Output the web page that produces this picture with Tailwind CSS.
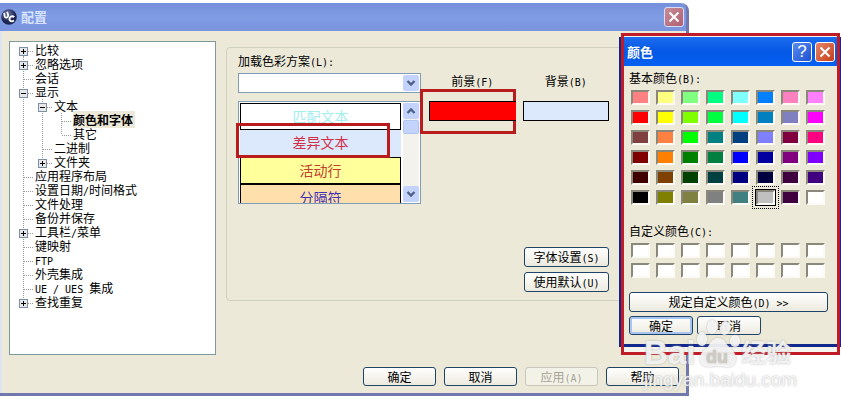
<!DOCTYPE html>
<html lang="zh-CN">
<head>
  <meta charset="UTF-8" />
  <meta name="viewport" content="width=device-width, initial-scale=1.0" />
  <title>配置</title>

  <!-- Tailwind (CDN) -->
  <script src="https://cdn.jsdelivr.net/npm/@tailwindcss/browser@4"></script>
</head>

<body class="bg-white text-black text-[12px] leading-[14px] font-['Noto_Sans_CJK_SC',sans-serif]">

  <!-- tree symbols -->
  <svg class="hidden">
    <symbol id="line" viewBox="0 0 19 14"><path d="M9.5 0V14" stroke="#9a9a9a" stroke-dasharray="1 1" /></symbol>
    <symbol id="tee" viewBox="0 0 19 14"><path d="M9.5 0V14M10 8.5H19" stroke="#9a9a9a" stroke-dasharray="1 1" fill="none" /></symbol>
    <symbol id="corner" viewBox="0 0 19 14"><path d="M9.5 0V8M10 8.5H19" stroke="#9a9a9a" stroke-dasharray="1 1" fill="none" /></symbol>
    <symbol id="box" viewBox="0 0 19 14">
      <path d="M14 8.5H19" stroke="#9a9a9a" stroke-dasharray="1 1" />
      <rect x="5.5" y="4.5" width="8" height="8" fill="#e6e8e8" stroke="#7b8ea5" />
      <path d="M7 8.5H12" stroke="#000" />
    </symbol>
    <symbol id="minus" viewBox="0 0 19 14"><path d="M9.5 0V14" stroke="#9a9a9a" stroke-dasharray="1 1" /><use href="#box" /></symbol>
    <symbol id="plus" viewBox="0 0 19 14"><path d="M9.5 0V14" stroke="#9a9a9a" stroke-dasharray="1 1" /><use href="#box" /><path d="M9.5 6V11" stroke="#000" /></symbol>
    <symbol id="plus-first" viewBox="0 0 19 14"><path d="M9.5 13V14" stroke="#9a9a9a" /><use href="#box" /><path d="M9.5 6V11" stroke="#000" /></symbol>
    <symbol id="plus-last" viewBox="0 0 19 14"><path d="M9.5 0V4" stroke="#9a9a9a" stroke-dasharray="1 1" /><use href="#box" /><path d="M9.5 6V11" stroke="#000" /></symbol>
    <symbol id="down" viewBox="0 0 16 16"><path d="M4.5 6L8 9.5L11.5 6" stroke="#4d6185" stroke-width="2.4" fill="none" /></symbol>
    <symbol id="up" viewBox="0 0 16 16"><path d="M4.5 10L8 6.5L11.5 10" stroke="#4d6185" stroke-width="2.4" fill="none" /></symbol>
    <symbol id="close" viewBox="0 0 20 20"><path d="M5 5L15 15M15 5L5 15" stroke="#fff" stroke-width="2.2" /></symbol>
  </svg>

  <div class="relative pt-[3px] pr-[152px]">

    <!-- main window -->
    <main class="border-r-[3px] border-b-[3px] border-[#7078ae] rounded-tr-lg bg-[#ece9d8]">
      <header class="h-7 flex items-center justify-between pl-px pr-[2px] rounded-tr-md bg-linear-to-b from-[#7590dc] via-[#7f9ce4] to-[#7a94e0]">
        <div class="flex items-center gap-1">
          <svg class="w-4 h-4" viewBox="0 0 16 16">
            <defs><radialGradient id="ball" cx=".4" cy=".3"><stop offset="0" stop-color="#6d78a8" /><stop offset="1" stop-color="#1c2450" /></radialGradient></defs>
            <circle cx="8" cy="8" r="7.8" fill="url(#ball)" />
            <path d="M3.2 3.8L3.6 7.2Q4.2 9 6 8.4Q7.6 7.6 7 5.6L6.2 2.8" fill="none" stroke="#fff" stroke-width="1.7" />
            <path d="M13.2 8.2Q11.6 6.6 9.6 7.8Q7.8 9.4 8.8 11.4Q10.4 13.2 13 11.6" fill="none" stroke="#fff" stroke-width="1.8" />
          </svg>
          <h1 class="text-[13px] font-bold text-[#d8e4fc]">配置</h1>
        </div>
        <button aria-label="关闭" class="w-5 h-5 rounded-[3px] border border-[#d8dcf4] bg-linear-to-br from-[#c88c98] to-[#b06070]">
          <svg class="w-full h-full"><use href="#close" /></svg>
        </button>
      </header>

      <div class="border-l-2 border-[#dfe3f0] pt-[10px] pl-[7px] pr-[7px] pb-[7px]">
        <div class="flex gap-[10px]">

          <!-- settings tree -->
          <ul id="tree" class="w-[207px] shrink-0 min-h-[314px] border border-[#7f9a9a] bg-white pt-px pl-1"></ul>

          <!-- colour scheme -->
          <section class="flex-1 mt-[6px] mb-[54px] border border-[#d0d0bf] rounded-[4px] pt-[5px] pl-[11px] pb-2 flex gap-2">
            <div class="w-[183px] shrink-0">
              <label for="scheme" class="block h-4 leading-4">加载色彩方案<span class="text-[10px] leading-none font-['DejaVu_Sans_Mono',monospace]">(L):</span></label>
              <div class="relative mt-1">
                <select id="scheme" class="block appearance-none w-full h-5 border border-[#7f9db9] bg-white"><option></option></select>
                <svg class="absolute right-[2px] top-[2px] w-4 h-4 bg-[#c3d3fb] rounded-[2px] pointer-events-none"><use href="#down" /></svg>
              </div>
              <div class="relative mt-2">
                <div class="h-[103px] border border-[#7f9db9] bg-white flex gap-[2px] p-px overflow-hidden">
                  <ul class="flex-1 text-center text-[14px] leading-[25px]">
                    <li class="h-[27px] border border-black text-[#a4eeee]">匹配文本</li>
                    <li class="h-[27px] bg-[#dce8fc] text-[#d03048]">差异文本</li>
                    <li class="h-[27px] border border-black bg-[#ffff9c] text-[#c04030]">活动行</li>
                    <li class="h-[27px] border border-black bg-[#ffe0ac] text-[#4030b8]">分隔符</li>
                  </ul>
                  <div class="w-4 flex flex-col bg-[#f3f2ec]">
                    <svg class="w-4 h-4 shrink-0 bg-[#c3d3fb] rounded-[2px]"><use href="#up" /></svg>
                    <div class="mt-px h-[14px] bg-[#c3d3fb] border border-[#b0c4f0] rounded-[2px]"></div>
                    <svg class="mt-auto w-4 h-4 shrink-0 bg-[#c3d3fb] rounded-[2px]"><use href="#down" /></svg>
                  </div>
                </div>
                <div class="absolute -left-[2px] top-[22px] w-[154px] h-[35px] border-[3px] border-[#b81c1c]"></div>
              </div>
            </div>

            <div class="w-[180px] shrink-0 pt-5 flex flex-col justify-between">
              <div class="grid grid-cols-2 gap-x-[7px] gap-y-3 text-center">
                <label for="fore" class="h-4 leading-4">前景<span class="text-[10px] leading-none font-['DejaVu_Sans_Mono',monospace]">(F)</span></label>
                <label for="back" class="h-4 leading-4">背景<span class="text-[10px] leading-none font-['DejaVu_Sans_Mono',monospace]">(B)</span></label>
                <div class="relative">
                  <div class="absolute -left-[9px] -top-3 w-24 h-[45px] border-[3px] border-[#b81c1c]"></div>
                  <button id="fore" class="relative block w-full h-5 border border-r-0 border-black bg-[#ff0000]"></button>
                </div>
                <button id="back" class="block w-full h-5 border border-black bg-[#dce9fc]"></button>
              </div>
              <div class="self-end flex flex-col gap-[5px]">
                <button class="w-[85px] h-5 rounded-[3px] border border-[#1f4468] bg-linear-to-b from-white to-[#eceadf] leading-4">字体设置<span class="text-[10px] leading-none font-['DejaVu_Sans_Mono',monospace]">(S)</span></button>
                <button class="w-[85px] h-5 rounded-[3px] border border-[#1f4468] bg-linear-to-b from-white to-[#eceadf] leading-4">使用默认<span class="text-[10px] leading-none font-['DejaVu_Sans_Mono',monospace]">(U)</span></button>
              </div>
            </div>
          </section>
        </div>

        <div class="mt-3 flex justify-end gap-2">
          <button class="w-[73px] h-[19px] rounded-[3px] border border-[#1f4468] bg-linear-to-b from-white to-[#eceadf] leading-4">确定</button>
          <button class="w-[73px] h-[19px] rounded-[3px] border border-[#1f4468] bg-linear-to-b from-white to-[#eceadf] leading-4">取消</button>
          <button disabled class="w-[73px] h-[19px] rounded-[3px] border border-[#c9c7ba] bg-[#f3f2e8] text-[#a5a394] leading-4">应用<span class="text-[10px] leading-none font-['DejaVu_Sans_Mono',monospace]">(A)</span></button>
          <button class="w-[73px] h-[19px] rounded-[3px] border border-[#1f4468] bg-linear-to-b from-white to-[#eceadf] leading-4">帮助</button>
        </div>
      </div>
    </main>

    <!-- colour picker, framed in red -->
    <div class="absolute right-px top-[33px] w-[219px] h-[322px] bg-[#f6f4ee]"></div>
    <section class="absolute right-0 top-[37px] w-[222px] border-x-2 border-b-[3px] border-[#10288c] bg-[#ece9d8]">
      <header class="h-[29px] flex items-center justify-between pl-[6px] pr-1 bg-linear-to-b from-[#1c6cf0] via-[#0558e4] to-[#0460f4]">
        <h2 class="text-[13px] font-bold text-white">颜色</h2>
        <div class="flex gap-[3px]">
          <button aria-label="帮助" class="w-5 h-5 rounded-[3px] border border-white bg-linear-to-br from-[#5c8cf0] to-[#1c50d0] text-white text-[17px] leading-[18px] font-['Liberation_Sans',sans-serif]">?</button>
          <button aria-label="关闭" class="w-5 h-5 rounded-[3px] border border-white bg-linear-to-br from-[#e88464] to-[#c43c18]">
            <svg class="w-full h-full"><use href="#close" /></svg>
          </button>
        </div>
      </header>
      <div class="pt-1 pl-2 pr-[11px] pb-[9px]">
        <h3 class="h-4 leading-4">基本颜色<span class="text-[10px] leading-none font-['DejaVu_Sans_Mono',monospace]">(B):</span></h3>
        <div id="basic" class="mt-1 pl-[2px] grid grid-cols-[repeat(8,25px)] gap-y-[5px]"></div>
        <h3 class="mt-[18px] h-4 leading-4">自定义颜色<span class="text-[10px] leading-none font-['DejaVu_Sans_Mono',monospace]">(C):</span></h3>
        <div id="custom" class="mt-1 pl-[2px] grid grid-cols-[repeat(8,25px)] gap-y-[5px]"></div>
        <button class="block mt-[14px] w-full h-5 rounded-[3px] border border-[#1f4468] bg-linear-to-b from-white to-[#eceadf] leading-4">规定自定义颜色<span class="text-[10px] leading-none font-['DejaVu_Sans_Mono',monospace]">(D) &gt;&gt;</span></button>
        <div class="mt-1 flex gap-1">
          <button class="w-16 h-[19px] rounded-[3px] border border-[#1f4468] bg-linear-to-b from-white to-[#eceadf] shadow-[inset_0_0_0_2px_#a8c4f0] leading-4">确定</button>
          <button class="w-16 h-[19px] rounded-[3px] border border-[#1f4468] bg-linear-to-b from-white to-[#eceadf] leading-4">取消</button>
        </div>
      </div>
    </section>
    <div class="absolute right-px top-[33px] w-[219px] h-[322px] border-[3px] border-[#c01c28] pointer-events-none"></div>

    <!-- watermark -->
    <div class="absolute right-[44px] top-[318px] w-[153px] text-white/80 [text-shadow:0_0_2px_#aaa] font-['Liberation_Sans','Noto_Sans_CJK_SC',sans-serif] pointer-events-none">
      <div class="h-[51px] flex items-end">
        <span class="text-[33px] leading-[32px] font-bold">Bai</span>
        <svg class="w-[46px] h-[50px] shrink-0 drop-shadow-[0_0_1px_#aaa]" viewBox="0 0 46 50">
          <g fill="#fff" fill-opacity=".8">
            <ellipse cx="7" cy="20" rx="5" ry="7" />
            <ellipse cx="17" cy="8" rx="5" ry="7" />
            <ellipse cx="30" cy="9" rx="5" ry="7" transform="rotate(12 30 9)" />
            <ellipse cx="40" cy="22" rx="5" ry="6" />
            <path d="M23 19Q29 19 32 26Q41 33 41 40Q40 49 31 48Q23 46 15 48Q5 48 5 40Q5 33 13 28Q17 19 23 19Z" />
          </g>
          <text x="11" y="44" font-size="18" font-weight="bold" fill="#cfcbc0">du</text>
        </svg>
        <span class="text-[25px] leading-[32px] font-bold shrink-0">经验</span>
      </div>
      <div class="text-[19px] leading-[22px]">jingyan.baidu.com</div>
    </div>
  </div>

  <script>
    // cells before the label, label text (half-width part is wrapped)
    const mono = '<span class="text-[10px] leading-none font-[\'DejaVu_Sans_Mono\',monospace] whitespace-pre">';
    const rows = [
      ['plus-first', '比较'],
      ['plus', '忽略选项'],
      ['tee', '会话'],
      ['minus', '显示'],
      ['line minus', '文本'],
      ['line line tee', '<b class="bg-[#ece9d8] pr-[2px]">颜色和字体</b>'],
      ['line line corner', '其它'],
      ['line tee', '二进制'],
      ['line plus-last', '文件夹'],
      ['tee', '应用程序布局'],
      ['tee', '设置日期' + mono + '/</span>时间格式'],
      ['tee', '文件处理'],
      ['tee', '备份并保存'],
      ['plus', '工具栏' + mono + '/</span>菜单'],
      ['tee', '键映射'],
      ['tee', mono + 'FTP</span>'],
      ['tee', '外壳集成'],
      ['tee', mono + 'UE / UES </span>集成'],
      ['plus-last', '查找重复'],
    ];
    document.getElementById('tree').innerHTML = rows.map(([cells, text]) =>
      '<li class="flex h-[14px] whitespace-nowrap">' +
      cells.split(' ').map(c => `<svg class="w-[19px] h-[14px] shrink-0"><use href="#${c}" /></svg>`).join('') +
      `<span class="pl-[2px]">${text}</span></li>`).join('');

    const colors = [
      '#ff8080', '#ffff80', '#80ff80', '#00ff80', '#80ffff', '#0080ff', '#ff80c0', '#ff80ff',
      '#ff0000', '#ffff00', '#80ff00', '#00ff40', '#00ffff', '#0080c0', '#8080c0', '#ff00ff',
      '#804040', '#ff8040', '#00ff00', '#008080', '#004080', '#8080ff', '#800040', '#ff0080',
      '#800000', '#ff8000', '#008000', '#008040', '#0000ff', '#0000a0', '#800080', '#8000ff',
      '#400000', '#804000', '#004000', '#004040', '#000080', '#000040', '#400040', '#400080',
      '#000000', '#808000', '#808040', '#808080', '#408080', '#c0c0c0', '#400040', '#ffffff',
    ];
    const swatch = (color, on) =>
      `<button aria-label="${color}" class="w-[19px] h-[15px] border-2 border-t-[#8a887a] border-l-[#8a887a] border-b-[#fbfaf4] border-r-[#fbfaf4] ${on ? 'ring-1 ring-black outline-1 outline-dotted outline-black outline-offset-[3px]' : ''}" style="background-color:${color}"></button>`;
    document.getElementById('basic').innerHTML = colors.map(c => swatch(c, c === '#c0c0c0')).join('');
    document.getElementById('custom').innerHTML = Array(16).fill('#ffffff').map(c => swatch(c, false)).join('');
  </script>
</body>
</html>
